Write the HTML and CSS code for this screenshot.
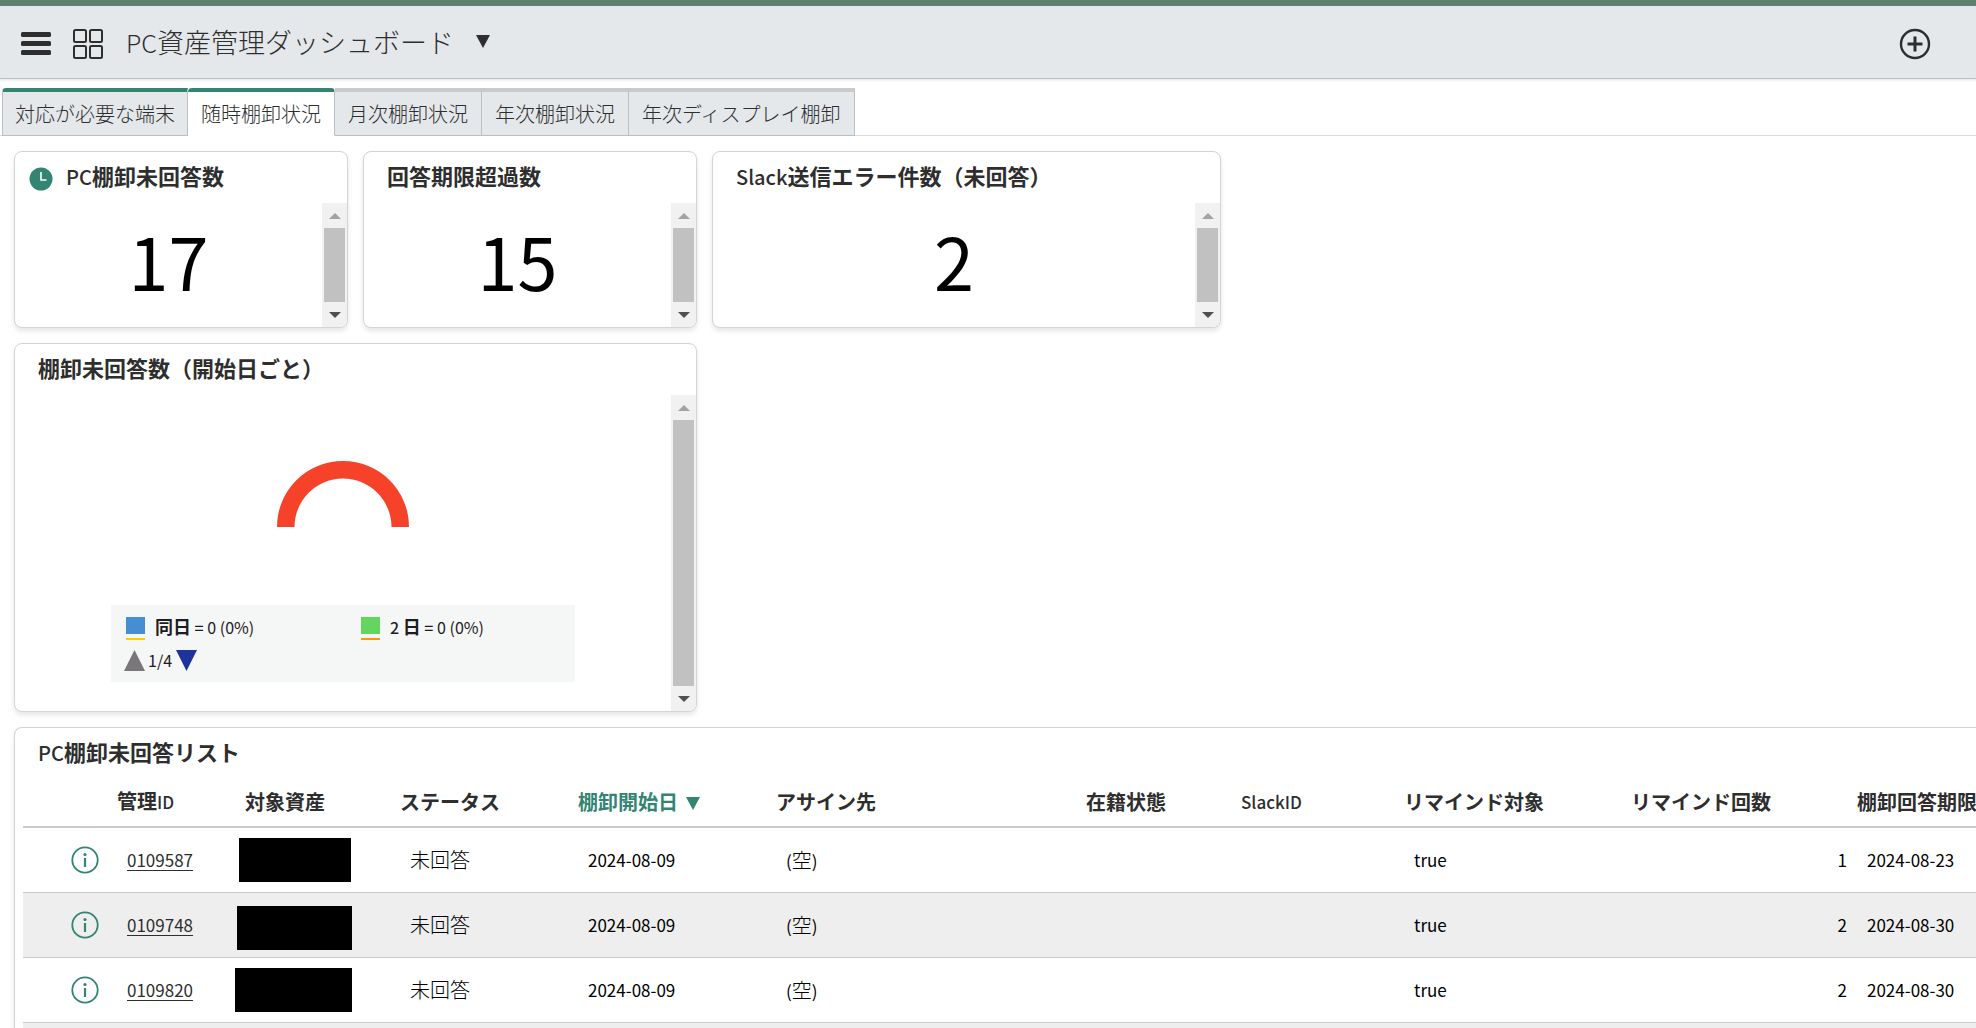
FILE: index.html
```html
<!DOCTYPE html>
<html lang="ja">
<head>
<meta charset="utf-8">
<title>PC資産管理ダッシュボード</title>
<link rel="stylesheet" href="styles.css">
</head>
<body>
<div class="app">
  <header class="topbar">
    <button class="icon-btn" type="button" aria-label="メニュー">
      <svg width="32" height="32" viewBox="0 0 32 32" fill="#2e2e2e"><rect x="1" y="4" width="30" height="5" rx="1.5"/><rect x="1" y="13" width="30" height="5" rx="1.5"/><rect x="1" y="22" width="30" height="5" rx="1.5"/></svg>
    </button>
    <button class="icon-btn" type="button" aria-label="ダッシュボード一覧">
      <svg width="32" height="32" viewBox="0 0 32 32" fill="none" stroke="#2e2e2e" stroke-width="2"><rect x="2" y="2" width="12" height="12" rx="1.5"/><rect x="18" y="2" width="12" height="12" rx="1.5"/><rect x="2" y="18" width="12" height="12" rx="1.5"/><rect x="18" y="18" width="12" height="12" rx="1.5"/></svg>
    </button>
    <button class="title-btn" type="button">
      <span><span class="latin">PC</span>資産管理ダッシュボード</span>
      <svg width="14" height="13" viewBox="0 0 14 13"><path d="M0 0H14L7 13Z" fill="#2e2e2e"/></svg>
    </button>
    <button class="icon-btn add-btn" type="button" aria-label="追加">
      <svg width="32" height="32" viewBox="0 0 32 32" fill="none" stroke="#2e2e2e"><circle cx="16" cy="16" r="14" stroke-width="2.4"/><path d="M16 8.5V23.500M8.500 16H23.500" stroke-width="3"/></svg>
    </button>
  </header>

  <div class="tabs" role="tablist">
    <button class="tab tab-visited" type="button" role="tab">対応が必要な端末</button>
    <button class="tab tab-active" type="button" role="tab" aria-selected="true">随時棚卸状況</button>
    <button class="tab" type="button" role="tab">月次棚卸状況</button>
    <button class="tab" type="button" role="tab">年次棚卸状況</button>
    <button class="tab" type="button" role="tab">年次ディスプレイ棚卸</button>
  </div>

  <main class="board">
    <div class="row">
      <section class="card card-s">
        <h2 class="card-title with-icon">
          <svg width="24" height="24" viewBox="0 0 24 24"><circle cx="12" cy="12" r="11.500" fill="#338473"/><path d="M12 5V13H17.500" fill="none" stroke="#fff" stroke-width="1.600"/></svg>
          <span><span class="latin">PC</span>棚卸未回答数</span>
        </h2>
        <div class="card-body">
          <div class="score">17</div>
          <div class="scrollbar"><i class="up"></i><b></b><i class="down"></i></div>
        </div>
      </section>
      <section class="card card-s">
        <h2 class="card-title">回答期限超過数</h2>
        <div class="card-body">
          <div class="score">15</div>
          <div class="scrollbar"><i class="up"></i><b></b><i class="down"></i></div>
        </div>
      </section>
      <section class="card card-m">
        <h2 class="card-title"><span class="latin">Slack</span>送信エラー件数（未回答）</h2>
        <div class="card-body">
          <div class="score">2</div>
          <div class="scrollbar"><i class="up"></i><b></b><i class="down"></i></div>
        </div>
      </section>
    </div>

    <section class="card card-l">
      <h2 class="card-title">棚卸未回答数（開始日ごと）</h2>
      <div class="card-body">
        <div class="chart">
          <svg width="132" height="66" viewBox="0 0 132 66"><path d="M0 66A66 66 0 0 1 132 66H114.500A48.500 48.500 0 0 0 17.500 66Z" fill="#f54228"/></svg>
          <div class="legend">
            <div class="legend-item"><span class="swatch blue"></span><span><span class="legend-cjk">同日</span> <b>=</b> 0 (0%)</span></div>
            <div class="legend-item"><span class="swatch green"></span><span><b>2</b> <span class="legend-cjk">日</span> <b>=</b> 0 (0%)</span></div>
            <div class="pager">
              <svg width="21" height="21" viewBox="0 0 21 21"><path d="M10.500 0L21 21H0Z" fill="#7a777a"/></svg>
              <span>1/4</span>
              <svg width="21" height="21" viewBox="0 0 21 21"><path d="M0 0H21L10.500 21Z" fill="#1f339d"/></svg>
            </div>
          </div>
        </div>
        <div class="scrollbar"><i class="up"></i><b></b><i class="down"></i></div>
      </div>
    </section>

    <section class="card card-list">
      <h2 class="card-title"><span class="latin">PC</span>棚卸未回答リスト</h2>
      <table class="list">
        <colgroup><col class="c-info"><col class="c-id"><col class="c-asset"><col class="c-status"><col class="c-start"><col class="c-assign"><col class="c-state"><col class="c-slack"><col class="c-remind"><col class="c-count"><col></colgroup>
        <thead>
          <tr><th></th><th>管理<span class="latin">ID</span></th><th class="asset">対象資産</th><th>ステータス</th><th class="sorted">棚卸開始日 <svg width="14" height="13" viewBox="0 0 14 13"><path d="M0 0H14L7 13Z" fill="#338473"/></svg></th><th>アサイン先</th><th>在籍状態</th><th><span class="latin">SlackID</span></th><th>リマインド対象</th><th>リマインド回数</th><th>棚卸回答期限</th></tr>
        </thead>
        <tbody>
          <tr><td class="info"><svg width="28" height="28" viewBox="0 0 28 28"><circle cx="14" cy="14" r="12.700" fill="none" stroke="#338473" stroke-width="1.800"/><circle cx="14" cy="8.500" r="1.600" fill="#338473"/><path d="M14 12V21" stroke="#338473" stroke-width="2.200"/></svg></td><td><a href="#">0109587</a></td><td class="asset"><span class="mask mask-a"></span></td><td class="cjk">未回答</td><td>2024-08-09</td><td>(<span class="cjk">空</span>)</td><td></td><td></td><td>true</td><td class="num">1</td><td>2024-08-23</td></tr>
          <tr><td class="info"><svg width="28" height="28" viewBox="0 0 28 28"><circle cx="14" cy="14" r="12.700" fill="none" stroke="#338473" stroke-width="1.800"/><circle cx="14" cy="8.500" r="1.600" fill="#338473"/><path d="M14 12V21" stroke="#338473" stroke-width="2.200"/></svg></td><td><a href="#">0109748</a></td><td class="asset"><span class="mask mask-b"></span></td><td class="cjk">未回答</td><td>2024-08-09</td><td>(<span class="cjk">空</span>)</td><td></td><td></td><td>true</td><td class="num">2</td><td>2024-08-30</td></tr>
          <tr><td class="info"><svg width="28" height="28" viewBox="0 0 28 28"><circle cx="14" cy="14" r="12.700" fill="none" stroke="#338473" stroke-width="1.800"/><circle cx="14" cy="8.500" r="1.600" fill="#338473"/><path d="M14 12V21" stroke="#338473" stroke-width="2.200"/></svg></td><td><a href="#">0109820</a></td><td class="asset"><span class="mask mask-c"></span></td><td class="cjk">未回答</td><td>2024-08-09</td><td>(<span class="cjk">空</span>)</td><td></td><td></td><td>true</td><td class="num">2</td><td>2024-08-30</td></tr>
          <tr><td></td><td></td><td></td><td></td><td></td><td></td><td></td><td></td><td></td><td></td><td></td></tr>
        </tbody>
      </table>
    </section>
  </main>
</div>
</body>
</html>
```
FILE: styles.css
```css
* { box-sizing: border-box; }
body {
  margin: 0;
  background: #fff;
  color: #2e2e2e;
  font: 17px/24px "Noto Sans CJK JP", sans-serif;
}
button { margin: 0; padding: 0; border: 0; background: none; color: inherit; font: inherit; cursor: pointer; }
svg { display: block; flex: none; }
.app { height: 100vh; overflow: hidden; }

/* Header */
.topbar {
  display: flex;
  align-items: center;
  height: 79px;
  padding: 3px 45px 0 20px;
  background: #e4e8eb;
  border-top: 6px solid #5f7f71;
  border-bottom: 1px solid #b9c0c6;
  box-shadow: 0 1px 3px rgba(0, 0, 0, .12);
}
.icon-btn { margin-right: 20px; }
.title-btn { display: flex; align-items: center; gap: 22px; padding: 0 0 4px 2px; font-size: 27px; line-height: 36px; font-weight: 300; }
.title-btn .latin { font-size: 25px; }
.add-btn { margin: 0 0 0 auto; }

/* Tabs */
.tabs { display: flex; margin-top: 9px; padding-left: 2px; border-bottom: 1px solid #d8dadc; }
.tab {
  height: 48px;
  margin-bottom: -1px;
  padding: 0 13px;
  background: #e4e8eb;
  border: 1px solid #b9bfc6;
  border-width: 4px 1px 1px 0;
  border-top-color: #cacaca;
  font-size: 20px;
  font-weight: 300;
  white-space: nowrap;
}
.tab-visited { padding: 0 12px; border-left-width: 1px; border-top-color: #338473; border-radius: 4px 0 0 0; }
.tab-active { background: #fff; border-top-color: #338473; border-bottom-color: #fff; border-radius: 4px 4px 0 0; }

/* Cards */
.board { display: flex; flex-direction: column; gap: 15px; padding: 15px 0 0 14px; }
.row { display: flex; gap: 15px; }
.card {
  display: flex;
  flex-direction: column;
  flex: none;
  overflow: hidden;
  background: #fff;
  border: 1px solid #d2d4d6;
  border-radius: 8px;
  box-shadow: 0 3px 5px rgba(0, 0, 0, .1);
}
.card-s { width: 334px; height: 177px; }
.card-m { width: 509px; height: 177px; }
.card-l { width: 683px; height: 369px; }
.card-title { flex: none; height: 51px; margin: 0; padding: 7px 23px 0; font-size: 22px; line-height: 32px; font-weight: 700; white-space: nowrap; }
.card-title .latin { font-size: 20px; font-weight: 500; }
.with-icon { display: flex; gap: 13px; padding-left: 14px; }
.with-icon svg { margin-top: 8px; }
.card-body { display: flex; flex: 1; min-height: 0; }
.score { flex: 1; color: #000; font-size: 72px; line-height: 114px; text-align: center; }

/* Scrollbars */
.scrollbar { display: flex; flex-direction: column; align-items: center; width: 25px; background: #f1f1f1; }
.scrollbar b { flex: 1; width: 21px; background: #c1c1c1; }
.scrollbar i { display: flex; align-items: center; justify-content: center; height: 25px; }
.scrollbar i::before { content: ""; border: 6px solid transparent; }
.scrollbar .up::before { border-top-width: 0; border-bottom-color: #a3a3a3; }
.scrollbar .down::before { border-bottom-width: 0; border-top-color: #505050; }

/* Chart */
.chart { display: flex; flex: 1; flex-direction: column; align-items: center; justify-content: space-between; padding: 66px 0 29px; }
.legend {
  display: grid;
  grid-template-columns: 235px 1fr;
  align-content: start;
  width: 464px;
  height: 77px;
  padding: 8px 0 0 15px;
  background: #f5f7f7;
  color: #1c1c22;
  font-size: 16px;
}
.legend-item { display: flex; gap: 10px; height: 34px; line-height: 26px; }
.legend-cjk { font-size: 18px; font-weight: 700; }
.legend-item b { font-weight: 500; }
.swatch { width: 19px; height: 23px; margin-top: 4px; border-bottom: 2px solid; }
.blue { color: #fc0; background: linear-gradient(#468ed3 17px, transparent 17px); }
.green { color: #ff9800; background: linear-gradient(#64d65f 17px, transparent 17px); }
.pager { display: flex; align-items: center; gap: 3px; height: 26px; margin-left: -2px; }
.pager span { width: 25px; }

/* List */
.card-list { padding-left: 8px; border-right: 0; border-radius: 8px 0 0 0; }
.card-list .card-title { height: 49px; padding-left: 15px; }
.list { width: 100%; table-layout: fixed; border-collapse: separate; border-spacing: 0; color: #000; }
.c-info { width: 94px; }
.c-id { width: 118px; }
.c-asset { width: 165px; }
.c-status { width: 178px; }
.c-start { width: 198px; }
.c-assign { width: 310px; }
.c-state { width: 155px; }
.c-slack { width: 163px; }
.c-remind { width: 227px; }
.c-count { width: 226px; }
.list th { height: 51px; padding: 0; border-bottom: 2px solid #cacaca; color: #2e2e2e; font-size: 20px; font-weight: 700; text-align: left; white-space: nowrap; }
.list th .latin { font-size: 17px; font-weight: 500; }
.list th.asset { padding-left: 10px; }
.list th.sorted { color: #338473; }
.sorted svg { display: inline-block; margin-left: 3px; }
.list td { height: 65px; padding: 0 10px; border-bottom: 1px solid #cacaca; white-space: nowrap; }
.list tbody tr:nth-child(even) { background: #eee; }
.list td.info { padding-left: 48px; }
.list a { color: #2e2e2e; text-underline-offset: 3px; }
.list .cjk { font-size: 20px; font-weight: 300; }
.list td.asset { padding: 0; }
.list td.num { text-align: right; }
.mask { display: block; height: 44px; background: #000; }
.mask-a { width: 112px; margin-left: 4px; }
.mask-b { width: 115px; margin: 5px 0 0 2px; }
.mask-c { width: 117px; }
```
